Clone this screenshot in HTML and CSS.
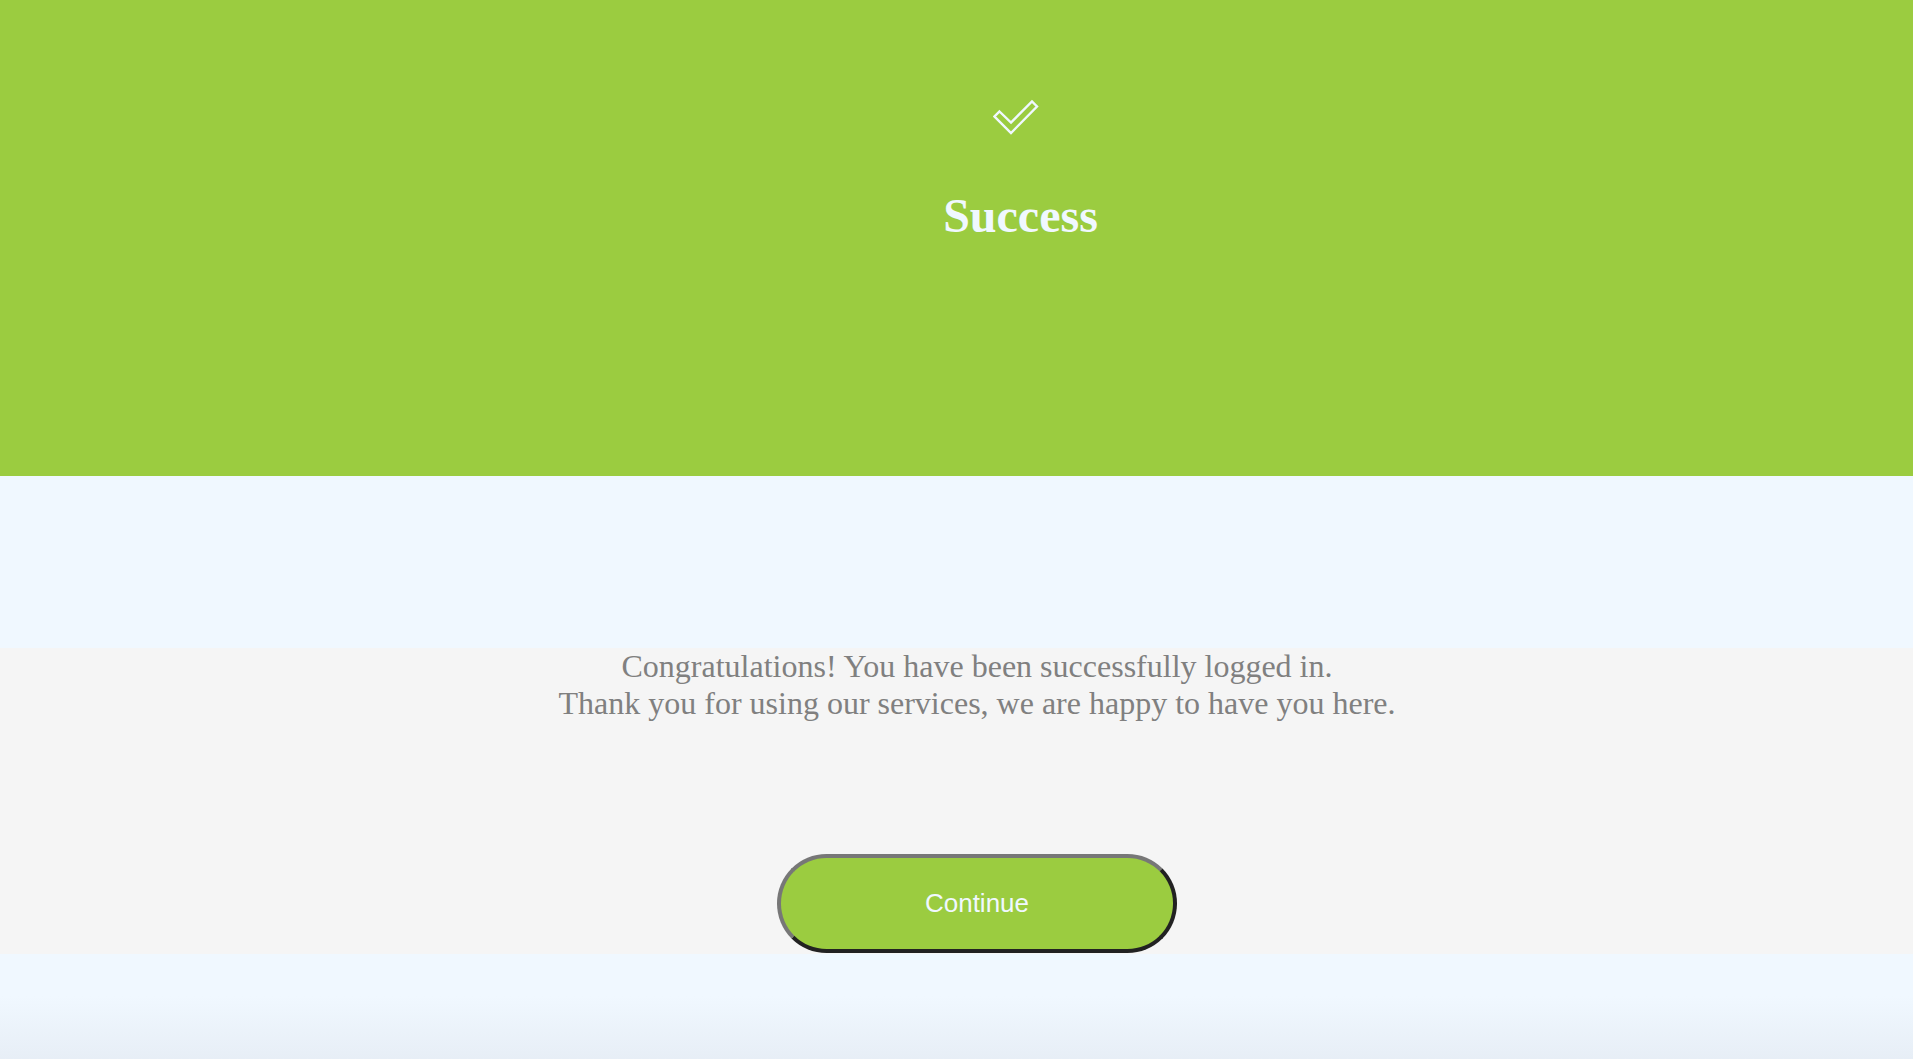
FILE: index.html
```html
<!DOCTYPE html>
<html lang="en">
<head>
<meta charset="utf-8">
<title>Success</title>
<link rel="stylesheet" href="styles.css">
</head>
<body>
<div class="page">
  <header class="hero">
    <svg class="hero-icon" width="46" height="36" viewBox="0 0 46 36" aria-hidden="true">
      <polygon points="6.5,12.5 18,23.5 39,2.5 44,7.5 18,34 1.5,17.5" fill="none" stroke="#f0f8ff" stroke-width="2.4" stroke-linejoin="miter"/>
    </svg>
    <h1 class="hero-title">Success</h1>
  </header>
  <div class="spacer"></div>
  <section class="message">
    <p class="message-text">Congratulations! You have been successfully logged in.<br>Thank you for using our services, we are happy to have you here.</p>
    <button class="continue-btn" type="button">Continue</button>
  </section>
  <footer class="foot"></footer>
</div>
</body>
</html>
```
FILE: styles.css
```css
html, body {
  margin: 0;
  padding: 0;
}
body {
  background: #f0f8ff;
  font-family: "Liberation Serif", "Times New Roman", serif;
}
.page {
  min-height: 100vh;
  display: flex;
  flex-direction: column;
}
.hero {
  background: #9bcc40;
  height: 476px;
  box-sizing: border-box;
  padding: 99px 0 0 128px;
  display: flex;
  flex-direction: column;
  align-items: center;
}
.hero-icon {
  display: block;
  margin-right: 9px;
}
.hero-title {
  margin: 54px 0 0;
  font-size: 48px;
  font-weight: bold;
  color: #f0f8ff;
  line-height: 53px;
}
.spacer {
  height: 172px;
  background: #f0f8ff;
}
.message {
  background: #f5f5f5;
  height: 306px;
  box-sizing: border-box;
  padding-left: 41px;
  display: flex;
  flex-direction: column;
  align-items: center;
}
.message-text {
  margin: 0;
  font-size: 32px;
  line-height: 37px;
  color: #808080;
  text-align: center;
}
.continue-btn {
  margin-top: 132px;
  width: 400px;
  height: 99px;
  box-sizing: border-box;
  border-radius: 50px;
  border: 4px solid;
  border-color: #777777 #222222 #222222 #777777;
  background: #9bcc40;
  color: #f0f8ff;
  font-family: "Liberation Sans", Arial, sans-serif;
  font-size: 26px;
  cursor: pointer;
}
.foot {
  flex: 1;
  background: linear-gradient(to bottom, #f0f8ff 0%, #f0f8ff 40%, #e7eef6 100%);
}
```
